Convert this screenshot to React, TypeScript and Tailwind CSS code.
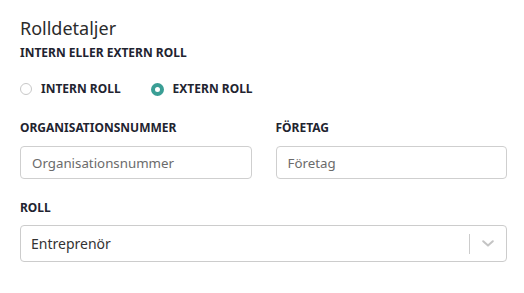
import React, { useState } from "react";

export default function App() {
    const [roleType, setRoleType] = useState<"intern" | "extern">("extern");

    return (
        <div className="w-[524px] h-[293px] bg-white pl-5 pr-[17px] pt-4 font-['Noto_Sans',sans-serif] text-[#1f2430]">
            <h2 className="text-[18px] leading-6 text-[#2b2b2b]">Rolldetaljer</h2>

            {/* Intern / extern */}
            <div className="mt-[5px] text-[12px] leading-4 font-bold">INTERN ELLER EXTERN ROLL</div>
            <div className="mt-5 flex items-center text-[12px] leading-4 font-bold">
                <label className="flex items-center gap-[9px] cursor-pointer" onClick={() => setRoleType("intern")}>
                    <span
                        className={
                            roleType === "intern"
                                ? "w-[13px] h-[13px] rounded-full border-[4px] border-[#3a9e95] bg-white"
                                : "w-3 h-3 rounded-full border border-[#c8c8c8] bg-white"
                        }
                    />
                    INTERN ROLL
                </label>
                <label className="ml-[30px] flex items-center gap-[9px] cursor-pointer" onClick={() => setRoleType("extern")}>
                    <span
                        className={
                            roleType === "extern"
                                ? "w-[13px] h-[13px] rounded-full border-[4px] border-[#3a9e95] bg-white"
                                : "w-3 h-3 rounded-full border border-[#c8c8c8] bg-white"
                        }
                    />
                    EXTERN ROLL
                </label>
            </div>

            {/* Org nr + företag */}
            <div className="mt-[23px] grid grid-cols-2 gap-x-6">
                <div>
                    <div className="text-[12px] leading-4 font-bold">ORGANISATIONSNUMMER</div>
                    <input
                        placeholder="Organisationsnummer"
                        className="mt-[10px] w-full h-[33px] px-[11px] rounded border border-[#cfcfcf] text-[13.3px] placeholder:text-[#6b6b6b] outline-none"
                    />
                </div>
                <div>
                    <div className="text-[12px] leading-4 font-bold">FÖRETAG</div>
                    <input
                        placeholder="Företag"
                        className="mt-[10px] w-full h-[33px] px-[11px] rounded border border-[#cfcfcf] text-[13.3px] placeholder:text-[#6b6b6b] outline-none"
                    />
                </div>
            </div>

            {/* Roll */}
            <div className="mt-[21px] text-[12px] leading-4 font-bold">ROLL</div>
            <div className="mt-[9px] h-[37px] flex items-center rounded border border-[#cccccc]">
                <span className="flex-1 pl-[10px] text-[14px] text-[#333333]">Entreprenör</span>
                <span className="w-px h-5 bg-[#cccccc]" />
                <span className="w-9 flex items-center justify-center text-[#c4c4c4]">
                    <svg width="12" height="7" viewBox="0 0 12 7" fill="none">
                        <path d="M1.2 1.2 L6 5.6 L10.8 1.2" stroke="currentColor" strokeWidth="2" strokeLinecap="round" strokeLinejoin="round" />
                    </svg>
                </span>
            </div>
        </div>
    );
}
